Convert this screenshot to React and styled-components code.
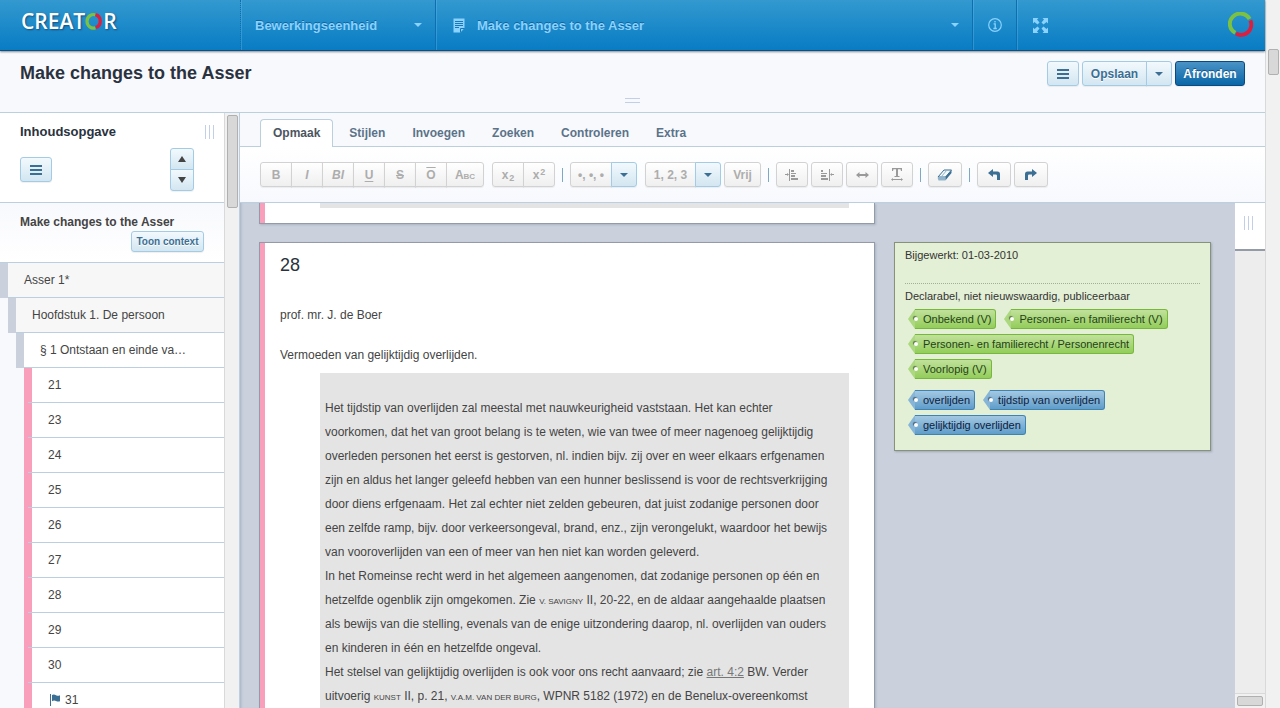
import React from "react";
import styled, { createGlobalStyle, css } from "styled-components";

const line = "#bccfde";
const steel = "#3b6f94";

const GlobalStyle = createGlobalStyle`
  * { box-sizing: border-box; }
  body {
    margin: 0;
    overflow: hidden;
    background: #f8f9fd;
    color: #444;
    font: 12px/16px "Liberation Sans", Arial, sans-serif;
  }
  button { font-family: inherit; margin: 0; cursor: pointer; }
  h1, h2, h3, p, ul { margin: 0; padding: 0; }
  ul { list-style: none; }
  svg { display: block; flex: none; }
`;

const Page = styled.div`
  display: flex;
  height: 100vh;
`;

const Main = styled.div`
  flex: 1;
  min-width: 0;
  display: flex;
  flex-direction: column;
`;

const ScrollTrack = styled.div`
  flex: 0 0 15px;
  border-left: 1px solid #d9d9d9;
  background: #f1f1f1;
  padding: ${(p) => p.$top}px 1px 0 2px;
`;

const ScrollThumb = styled.div`
  height: ${(p) => p.$size}px;
  border: 1px solid #b0b0b0;
  border-radius: 2px;
  background: #d8d8d8;
`;

/* Top bar */

const TopBar = styled.header`
  flex: none;
  display: flex;
  height: 51px;
  position: relative;
  border-bottom: 1px solid #0a4f86;
  background: linear-gradient(#3399cf, #087cc4);
  box-shadow: 0 1px 2px rgba(0, 0, 0, 0.45);
`;

const Brand = styled.div`
  flex: 0 0 240px;
  display: flex;
  align-items: center;
  padding: 0 0 8px 21px;
  color: #fff;
  font: 600 21px/24px "Open Sans", "Noto Sans", sans-serif;
  text-shadow: 1px 1px 2px rgba(0, 40, 80, 0.6);
`;

const NavButton = styled.button`
  flex: ${(p) => p.$flex || "none"};
  display: flex;
  align-items: center;
  justify-content: ${(p) => (p.$center ? "center" : "flex-start")};
  gap: 12px;
  padding: ${(p) => (p.$center ? "0" : p.$icon ? "0 13px 0 17px" : "0 13px 0 14px")};
  border: 0;
  border-left: 1px ${(p) => (p.$dotted ? "dotted" : "solid")} #0d6fb0;
  box-shadow: inset 1px 0 0 rgba(120, 200, 250, 0.3);
  background: none;
  color: #8ad2ff;
  font-size: 13px;
  font-weight: bold;
  text-shadow: 0 -1px 0 rgba(0, 60, 110, 0.5);
`;

const NavLabel = styled.span`
  flex: 1;
  text-align: left;
`;

const Emblem = styled.div`
  flex: 0 0 249px;
  display: flex;
  align-items: center;
  justify-content: flex-end;
  padding-right: 11px;
  border-left: 1px solid #0d6fb0;
  box-shadow: inset 1px 0 0 rgba(120, 200, 250, 0.3);
`;

const FullScreen = styled.button`
  margin: 0 auto 0 8px;
  width: 30px;
  height: 30px;
  display: grid;
  place-items: center;
  padding: 0;
  border: 0;
  background: none;
  color: #8ad2ff;
`;

/* Title strip */

const TitleStrip = styled.section`
  flex: none;
  padding: 10px 20px 9px;
  border-bottom: 1px solid ${line};
  box-shadow: 0 1px 2px rgba(100, 130, 160, 0.25);
  background: #f8f9fd;
`;

const TitleRow = styled.div`
  display: flex;
  align-items: flex-start;
  gap: 3px;
`;

const Title = styled.h1`
  flex: 1;
  color: #2a323e;
  font-size: 18px;
  line-height: 24px;
`;

const HandleH = styled.div`
  width: 15px;
  height: 5px;
  margin: 12px auto 0;
  border: solid #c3cfe6;
  border-width: 1px 0;
`;

const HandleV = styled.div`
  width: 9px;
  height: 14px;
  display: flex;
  justify-content: center;
  border: solid #c3cfe6;
  border-width: 0 1px;
  &::before {
    content: "";
    width: 1px;
    background: #c3cfe6;
  }
`;

/* Buttons */

const looks = {
  blue: css`
    border-color: #a3cbe4;
    background: linear-gradient(#f2f9fd, #d3e6f1);
    color: ${steel};
    text-shadow: 0 1px 0 #fff;
  `,
  primary: css`
    border-color: #0a4a80;
    background: linear-gradient(#4a93c6, #0866a8);
    color: #fff;
    text-shadow: 0 -1px 0 rgba(0, 40, 80, 0.5);
  `,
  grey: css`
    border-color: #d2d2d2;
    background: linear-gradient(#ffffff, #efefef);
    color: #adadad;
  `,
};

const Button = styled.button`
  display: flex;
  align-items: center;
  justify-content: center;
  width: ${(p) => (p.$w ? p.$w + "px" : "auto")};
  height: ${(p) => p.$h || 25}px;
  padding: 0;
  border: 1px solid;
  border-radius: 3px;
  box-shadow: 0 1px 1px rgba(0, 0, 0, 0.06);
  font-size: ${(p) => p.$size || 12}px;
  font-weight: bold;
  line-height: 14px;
  ${(p) => looks[p.$look || "grey"]}
`;

const Group = styled.div`
  display: flex;
  flex-direction: ${(p) => (p.$vertical ? "column" : "row")};
  & > ${Button} { border-radius: 0; }
  ${(p) =>
    p.$vertical
      ? css`
          & > ${Button} + ${Button} { margin-top: -1px; }
          & > ${Button}:first-child { border-radius: 3px 3px 0 0; }
          & > ${Button}:last-child { border-radius: 0 0 3px 3px; }
        `
      : css`
          & > ${Button} + ${Button} { margin-left: -1px; }
          & > ${Button}:first-child { border-radius: 3px 0 0 3px; }
          & > ${Button}:last-child { border-radius: 0 3px 3px 0; }
        `}
`;

const Glyph = styled.span`
  font-style: ${(p) => (p.$italic ? "italic" : "normal")};
  font-variant: ${(p) => (p.$caps ? "small-caps" : "normal")};
  text-decoration: ${(p) => p.$line || "none"};
  text-underline-offset: 2px;
`;

const Index = styled.small`
  font-size: 9px;
  line-height: 8px;
  margin-left: 1px;
  align-self: center;
  padding: ${(p) => (p.$low ? "7px 0 0" : "0 0 6px")};
`;

/* Workspace */

const Workspace = styled.div`
  flex: 1;
  min-height: 0;
  display: flex;
`;

const Sidebar = styled.aside`
  flex: 0 0 240px;
  display: flex;
  border-right: 1px solid ${line};
`;

const SidebarBody = styled.div`
  flex: 1;
  min-width: 0;
  overflow: hidden;
`;

const TocHead = styled.div`
  height: 90px;
  padding: 10px 10px 0 20px;
  border-bottom: 1px solid ${line};
  background: #fff;
`;

const HeadRow = styled.div`
  display: flex;
  align-items: center;
  justify-content: space-between;
  height: 18px;
  color: #2a323e;
`;

const TocTitle = styled.h2`
  font-size: 13px;
  line-height: 18px;
`;

const TocTools = styled.div`
  display: flex;
  align-items: center;
  justify-content: space-between;
  padding: 7px 20px 0 0;
`;

const DocHead = styled.div`
  height: 60px;
  padding: 10px 20px 0;
  border-bottom: 1px solid ${line};
  background: linear-gradient(#f8f9fd, #fff);
`;

const DocTitle = styled.h3`
  font-size: 12px;
  line-height: 18px;
`;

const AlignEnd = styled.div`
  display: flex;
  justify-content: flex-end;
`;

const TreeRow = styled.li`
  display: flex;
  height: 35px;
  padding-left: ${(p) => p.$level * 8}px;
`;

const TreeBar = styled.span`
  flex: 0 0 8px;
  background: ${(p) =>
    p.$pink
      ? `linear-gradient(${line}, ${line}) right bottom / 4px 1px no-repeat #fa9fbb`
      : "#cad1dd"};
`;

const TreeLink = styled.a`
  flex: 1;
  min-width: 0;
  display: flex;
  align-items: center;
  gap: 4px;
  padding-left: 16px;
  border-bottom: 1px solid ${line};
  background: ${(p) => (p.$shade ? "#f7f7f7" : "#fff")};
  color: #444;
  text-decoration: none;
  white-space: nowrap;
`;

const Editor = styled.div`
  flex: 1;
  min-width: 0;
  display: flex;
  flex-direction: column;
`;

const Tabs = styled.div`
  flex: none;
  display: flex;
  height: 34px;
  padding: 6px 20px 0;
  border-bottom: 1px solid ${line};
  background: #f8f9fd;
`;

const Tab = styled.button`
  height: 28px;
  padding: 0 12px 1px;
  margin-right: ${(p) => (p.$active ? 3 : 1)}px;
  border: 1px solid ${(p) => (p.$active ? line : "transparent")};
  border-bottom: 0;
  border-radius: 4px 4px 0 0;
  background: ${(p) => (p.$active ? "#fff" : "none")};
  color: ${(p) => (p.$active ? "#4c5560" : "#5b7389")};
  font-size: 12px;
  font-weight: bold;
`;

const Toolbar = styled.div`
  flex: none;
  display: flex;
  align-items: center;
  height: 56px;
  padding: 0 20px;
  border-bottom: 1px solid ${line};
  background: linear-gradient(#fff, #f7f9fe);
`;

const Cluster = styled.div`
  display: flex;
  gap: ${(p) => p.$gap || 3}px;
`;

const Separator = styled.span`
  width: 1px;
  height: 14px;
  margin: 0 7px;
  background: #7fa9c3;
`;

const Stage = styled.div`
  flex: 1;
  min-height: 0;
  display: flex;
`;

const Canvas = styled.main`
  flex: 1;
  min-width: 0;
  overflow: hidden;
  display: flex;
  flex-direction: column;
  gap: 18px;
  padding: 0 24px 0 19px;
  background: #cad1dd;
  box-shadow: inset 3px 0 3px -2px rgba(80, 100, 130, 0.3);
`;

const CanvasRow = styled.div`
  flex: none;
  display: flex;
  align-items: flex-start;
  gap: 19px;
`;

const Card = styled.article`
  flex: 1;
  min-width: 0;
  border: 1px solid #949ba8;
  border-top-width: ${(p) => (p.$cut ? 0 : 1)}px;
  background: linear-gradient(90deg, #fa9fbb 5px, #fff 5px);
  padding: ${(p) => (p.$cut ? "0 25px 15px 60px" : "10px 25px 20px 20px")};
  box-shadow: 1px 1px 2px rgba(80, 90, 110, 0.25);
`;

const CutBlock = styled.div`
  height: 5px;
  background: #e4e4e4;
`;

const CardTitle = styled.h2`
  color: #2a323e;
  font-size: 18px;
  font-weight: normal;
  line-height: 24px;
`;

const Para = styled.p`
  line-height: 24px;
  margin-top: ${(p) => p.$top}px;
`;

const Quote = styled.div`
  margin: 6px 0 0 40px;
  padding: 23px 5px;
  background: #e4e4e4;
  line-height: 24px;
`;

const Caps = styled.span`
  font-size: 8px;
  line-height: 8px;
  text-transform: uppercase;
`;

const Ref = styled.a`
  color: #777;
`;

const SideColumn = styled.div`
  flex: 0 0 317px;
`;

const Note = styled.aside`
  height: 209px;
  padding: 4px 10px;
  border: 1px solid #87917c;
  background: #e3f0d5;
  box-shadow: 1px 1px 2px rgba(80, 90, 110, 0.35);
  color: #333;
  font-size: 11px;
`;

const NoteDate = styled.p`
  padding-bottom: 20px;
  margin-bottom: 4px;
  border-bottom: 1px dotted #a3ad98;
`;

const TagList = styled.div`
  display: flex;
  flex-wrap: wrap;
  gap: 5px 15px;
  padding-left: 10px;
  margin-top: ${(p) => p.$top}px;
`;

const Tag = styled.span`
  position: relative;
  height: 20px;
  padding: 0 4px 0 8px;
  border: 1px solid ${(p) => (p.$blue ? "#3f83b5" : "#76b83c")};
  border-left: 0;
  border-radius: 0 3px 3px 0;
  background: ${(p) =>
    p.$blue
      ? "linear-gradient(#a3c8e2, #5f9dca)"
      : "linear-gradient(#c1e19b, #93cd5a)"};
  color: ${(p) => (p.$blue ? "#10203c" : "#24421a")};
  line-height: 18px;
  &::before {
    content: "";
    position: absolute;
    left: -7px;
    top: -1px;
    border: solid transparent;
    border-width: 10px 7px 10px 0;
    border-right-color: ${(p) => (p.$blue ? "#86b5d8" : "#acd880")};
  }
  &::after {
    content: "";
    position: absolute;
    left: -1px;
    top: 7px;
    width: 4px;
    height: 4px;
    border-radius: 2px;
    background: #fff;
    box-shadow: -1px -1px 1px rgba(0, 0, 0, 0.5);
  }
`;

const Rail = styled.div`
  flex: 0 0 30px;
  display: flex;
  flex-direction: column;
  justify-content: space-between;
  background: #ededed;
`;

const RailHead = styled.div`
  height: 48px;
  padding: 13px 0 0 9px;
  border-bottom: 2px solid #949ba8;
  background: #fff;
`;

const RailFoot = styled.div`
  height: 15px;
  padding: 2px;
  border-top: 1px solid #d9d9d9;
  background: #f1f1f1;
`;

/* Drawings */

const Ring = () => (
  <svg width="26" height="26" viewBox="0 0 26 26" fill="none" strokeWidth="4">
    <path d="M21.6 7A10.5 10.2 0 1 0 7.4 20.8" stroke="#7cc142" />
    <path d="M22.4 8.4A10.3 10.3 0 0 1 8 21.6" stroke="#dc1f3e" />
  </svg>
);

const LetterRing = () => (
  <svg width="18" height="18" viewBox="0 0 18 18" fill="none" strokeWidth="3.2">
    <path d="M11 3A6.6 6.8 0 1 0 10.4 15.9" stroke="#7cc142" />
    <path d="M10.4 2.6A6.6 6.8 0 0 1 10.8 15.6" stroke="#dc1f3e" />
  </svg>
);

const Caret = () => (
  <svg width="8" height="4" viewBox="0 0 8 4" fill="currentColor">
    <path d="M0 0H8L4 4Z" />
  </svg>
);

const Arrow = ({ up }) => (
  <svg width="8" height="6" viewBox="0 0 8 6" fill="#444">
    <path d={up ? "M0 6L4 0L8 6Z" : "M0 0H8L4 6Z"} />
  </svg>
);

const Menu = () => (
  <svg width="12" height="10" viewBox="0 0 12 10" fill="currentColor">
    <path d="M0 0H12V2H0ZM0 4H12V6H0ZM0 8H12V10H0Z" />
  </svg>
);

const Doc = () => (
  <svg width="12" height="15" viewBox="0 0 12 15">
    <path d="M0.5 0.5H11.5V10L7.5 14.5H0.5Z" fill="#8ad2ff" />
    <path d="M2 3.5H10M2 5.5H10M2 7.5H10M2 9.5H6" stroke="#1a76b4" />
    <path d="M7.5 14.5V10.5H11.5" stroke="#1a76b4" fill="none" />
  </svg>
);

const Info = () => (
  <svg width="14" height="14" viewBox="0 0 14 14" fill="none" stroke="currentColor">
    <circle cx="7" cy="7" r="6.3" strokeWidth="1.2" />
    <path d="M7 3V4.4M5.6 5.9H7.2V10.4M5.4 10.5H8.8" strokeWidth="1.3" />
  </svg>
);

const Expand = () => (
  <svg width="15" height="15" viewBox="0 0 15 15" fill="currentColor">
    <path d="M0 0H5.5L4 1.5L6.5 4.5L4.5 6.5L1.5 4L0 5.5ZM15 0V5.5L13.5 4L10.5 6.5L8.5 4.5L11 1.5L9.5 0ZM0 15V9.5L1.5 11L4.5 8.5L6.5 10.5L4 13.5L5.5 15ZM15 15H9.5L11 13.5L8.5 10.5L10.5 8.5L13.5 11L15 9.5Z" />
  </svg>
);

const IndentLeft = () => (
  <svg width="14" height="12" viewBox="0 0 14 12" fill="#9a9a9a">
    <path d="M4 0H5V12H4ZM0 5H2V4L4 5.5L2 7V6H0ZM6 1H9V3H6ZM6 4H11V5H6ZM6 6H10V8H6ZM6 9H13V11H6Z" />
  </svg>
);

const IndentRight = () => (
  <svg width="14" height="12" viewBox="0 0 14 12" fill="#9a9a9a">
    <path d="M9 0H10V12H9ZM14 5H12V4L10 5.5L12 7V6H14ZM1 1H3V3H1ZM1 4H7V5H1ZM1 6H6V8H1ZM1 9H8V11H1Z" />
  </svg>
);

const WidthArrow = () => (
  <svg width="13" height="6" viewBox="0 0 13 6" fill="#9a9a9a">
    <path d="M0 3L3.5 0V2H9.5V0L13 3L9.5 6V4H3.5V6Z" />
  </svg>
);

const TextWidth = () => (
  <svg width="12" height="13" viewBox="0 0 12 13" fill="#9a9a9a">
    <path d="M1 0H11V3H10L9.5 1.2H7V8H8.5V9H3.5V8H5V1.2H2.5L2 3H1ZM0 11.5L2 10V11H10V10L12 11.5L10 13V12H2V13Z" />
  </svg>
);

const Eraser = () => (
  <svg width="16" height="12" viewBox="0 0 16 12">
    <path d="M1 8L7 1H14.5L8.5 8Z" fill="#f4f9fc" stroke={steel} />
    <path d="M0.5 8.5H8.5V11.5H1.5Z" fill="#8fb4cc" />
    <path d="M8.5 8L14.5 1.2V4L8.5 11.2Z" fill={steel} />
    <path d="M4 8L10 1" stroke="#8fb4cc" />
  </svg>
);

const Undo = ({ flip }) => (
  <svg width="12" height="11" viewBox="0 0 12 11" fill={steel}>
    <path
      transform={flip ? "matrix(-1 0 0 1 12 0)" : undefined}
      d="M0 4L5 0V2.6H9.5Q12 2.6 12 5.2V11H9V6.8Q9 5.6 7.8 5.6H5V8Z"
    />
  </svg>
);

const Flag = () => (
  <svg width="13" height="12" viewBox="0 0 13 12" fill={steel}>
    <path d="M2 0H3V12H2ZM4 1Q6 0 8 1.2T12 1.2V7.2Q10 8 8 7T4 7.2Z" />
  </svg>
);

const tree = [
  { level: 0, label: "Asser 1*", shade: true },
  { level: 1, label: "Hoofdstuk 1. De persoon", shade: true },
  { level: 2, label: "§ 1 Ontstaan en einde va…" },
  ...["21", "23", "24", "25", "26", "27", "28", "29", "30"].map((label) => ({
    level: 3,
    label,
    pink: true,
  })),
  { level: 3, label: "31", pink: true, flag: true },
];

const tabs = ["Opmaak", "Stijlen", "Invoegen", "Zoeken", "Controleren", "Extra"];

export default function App() {
  return (
    <Page>
      <GlobalStyle />
      <Main>
        <TopBar>
          <Brand>
            CREAT
            <LetterRing />R
          </Brand>
          <NavButton $flex="0 0 195px" $dotted>
            <NavLabel>Bewerkingseenheid</NavLabel>
            <Caret />
          </NavButton>
          <NavButton $flex="1 1 0" $icon>
            <Doc />
            <NavLabel>Make changes to the Asser</NavLabel>
            <Caret />
          </NavButton>
          <NavButton $flex="0 0 44px" $center aria-label="Info">
            <Info />
          </NavButton>
          <Emblem>
            <FullScreen aria-label="Volledig scherm">
              <Expand />
            </FullScreen>
            <Ring />
          </Emblem>
        </TopBar>

        <TitleStrip>
          <TitleRow>
            <Title>Make changes to the Asser</Title>
            <Button $look="blue" $w={32} aria-label="Menu">
              <Menu />
            </Button>
            <Group>
              <Button $look="blue" $w={65}>Opslaan</Button>
              <Button $look="blue" $w={26} aria-label="Meer opties">
                <Caret />
              </Button>
            </Group>
            <Button $look="primary" $w={70}>Afronden</Button>
          </TitleRow>
          <HandleH />
        </TitleStrip>

        <Workspace>
          <Sidebar>
            <SidebarBody>
              <TocHead>
                <HeadRow>
                  <TocTitle>Inhoudsopgave</TocTitle>
                  <HandleV />
                </HeadRow>
                <TocTools>
                  <Button $look="blue" $w={32} aria-label="Menu">
                    <Menu />
                  </Button>
                  <Group $vertical>
                    <Button $look="blue" $w={24} $h={22} aria-label="Vorige">
                      <Arrow up />
                    </Button>
                    <Button $look="blue" $w={24} $h={22} aria-label="Volgende">
                      <Arrow />
                    </Button>
                  </Group>
                </TocTools>
              </TocHead>
              <DocHead>
                <DocTitle>Make changes to the Asser</DocTitle>
                <AlignEnd>
                  <Button $look="blue" $w={73} $h={21} $size={10}>
                    Toon context
                  </Button>
                </AlignEnd>
              </DocHead>
              <ul>
                {tree.map((n) => (
                  <TreeRow key={n.label} $level={n.level}>
                    <TreeBar $pink={n.pink} />
                    <TreeLink href="#" $shade={n.shade}>
                      {n.flag && <Flag />}
                      {n.label}
                    </TreeLink>
                  </TreeRow>
                ))}
              </ul>
            </SidebarBody>
            <ScrollTrack $top={2}>
              <ScrollThumb $size={93} />
            </ScrollTrack>
          </Sidebar>

          <Editor>
            <Tabs role="tablist">
              {tabs.map((t, i) => (
                <Tab key={t} role="tab" aria-selected={i === 0} $active={i === 0}>
                  {t}
                </Tab>
              ))}
            </Tabs>
            <Toolbar>
              <Cluster $gap={8}>
                <Group>
                  <Button $w={32}><Glyph>B</Glyph></Button>
                  <Button $w={32}><Glyph $italic>I</Glyph></Button>
                  <Button $w={32}><Glyph $italic>BI</Glyph></Button>
                  <Button $w={32}><Glyph $line="underline">U</Glyph></Button>
                  <Button $w={32}><Glyph $line="line-through">S</Glyph></Button>
                  <Button $w={32}><Glyph $line="overline">O</Glyph></Button>
                  <Button $w={38}><Glyph $caps>Abc</Glyph></Button>
                </Group>
                <Group>
                  <Button $w={32}>x<Index $low>2</Index></Button>
                  <Button $w={32}>x<Index>2</Index></Button>
                </Group>
              </Cluster>
              <Separator />
              <Cluster $gap={8}>
                <Group>
                  <Button $w={42}>•, •, •</Button>
                  <Button $look="blue" $w={26} aria-label="Lijststijl"><Caret /></Button>
                </Group>
                <Cluster>
                  <Group>
                    <Button $w={51}>1, 2, 3</Button>
                    <Button $look="blue" $w={26} aria-label="Nummering"><Caret /></Button>
                  </Group>
                  <Button $w={37}>Vrij</Button>
                </Cluster>
              </Cluster>
              <Separator />
              <Cluster>
                <Button $w={32} aria-label="Inspringen links"><IndentLeft /></Button>
                <Button $w={32} aria-label="Inspringen rechts"><IndentRight /></Button>
                <Button $w={32} aria-label="Breedte"><WidthArrow /></Button>
                <Button $w={32} aria-label="Tekstbreedte"><TextWidth /></Button>
              </Cluster>
              <Separator />
              <Button $w={34} aria-label="Wissen"><Eraser /></Button>
              <Separator />
              <Cluster>
                <Button $w={34} aria-label="Ongedaan maken"><Undo /></Button>
                <Button $w={34} aria-label="Opnieuw"><Undo flip /></Button>
              </Cluster>
            </Toolbar>

            <Stage>
              <Canvas>
                <CanvasRow>
                  <Card $cut>
                    <CutBlock />
                  </Card>
                  <SideColumn />
                </CanvasRow>
                <CanvasRow>
                  <Card>
                    <CardTitle>28</CardTitle>
                    <Para $top={26}>prof. mr. J. de Boer</Para>
                    <Para $top={16}>Vermoeden van gelijktijdig overlijden.</Para>
                    <Quote>
                      <p>
                        Het tijdstip van overlijden zal meestal met nauwkeurigheid vaststaan. Het kan echter<br />
                        voorkomen, dat het van groot belang is te weten, wie van twee of meer nagenoeg gelijktijdig<br />
                        overleden personen het eerst is gestorven, nl. indien bijv. zij over en weer elkaars erfgenamen<br />
                        zijn en aldus het langer geleefd hebben van een hunner beslissend is voor de rechtsverkrijging<br />
                        door diens erfgenaam. Het zal echter niet zelden gebeuren, dat juist zodanige personen door<br />
                        een zelfde ramp, bijv. door verkeersongeval, brand, enz., zijn verongelukt, waardoor het bewijs<br />
                        van vooroverlijden van een of meer van hen niet kan worden geleverd.
                      </p>
                      <p>
                        In het Romeinse recht werd in het algemeen aangenomen, dat zodanige personen op één en<br />
                        hetzelfde ogenblik zijn omgekomen. Zie <Caps>v. savigny</Caps> II, 20-22, en de aldaar aangehaalde plaatsen<br />
                        als bewijs van die stelling, evenals van de enige uitzondering daarop, nl. overlijden van ouders<br />
                        en kinderen in één en hetzelfde ongeval.
                      </p>
                      <p>
                        Het stelsel van gelijktijdig overlijden is ook voor ons recht aanvaard; zie{" "}
                        <Ref href="#">art. 4:2</Ref> BW. Verder<br />
                        uitvoerig <Caps>kunst</Caps> II, p. 21, <Caps>v.a.m. van der burg</Caps>, WPNR 5182 (1972) en de
                        Benelux-overeenkomst
                      </p>
                    </Quote>
                  </Card>
                  <SideColumn>
                    <Note>
                      <NoteDate>Bijgewerkt: 01-03-2010</NoteDate>
                      <p>Declarabel, niet nieuwswaardig, publiceerbaar</p>
                      <TagList $top={5}>
                        <Tag>Onbekend (V)</Tag>
                        <Tag>Personen- en familierecht (V)</Tag>
                        <Tag>Personen- en familierecht / Personenrecht</Tag>
                        <Tag>Voorlopig (V)</Tag>
                      </TagList>
                      <TagList $top={11}>
                        <Tag $blue>overlijden</Tag>
                        <Tag $blue>tijdstip van overlijden</Tag>
                        <Tag $blue>gelijktijdig overlijden</Tag>
                      </TagList>
                    </Note>
                  </SideColumn>
                </CanvasRow>
              </Canvas>
              <Rail>
                <RailHead>
                  <HandleV />
                </RailHead>
                <RailFoot>
                  <ScrollThumb $size={10} />
                </RailFoot>
              </Rail>
            </Stage>
          </Editor>
        </Workspace>
      </Main>
      <ScrollTrack $top={49}>
        <ScrollThumb $size={26} />
      </ScrollTrack>
    </Page>
  );
}
